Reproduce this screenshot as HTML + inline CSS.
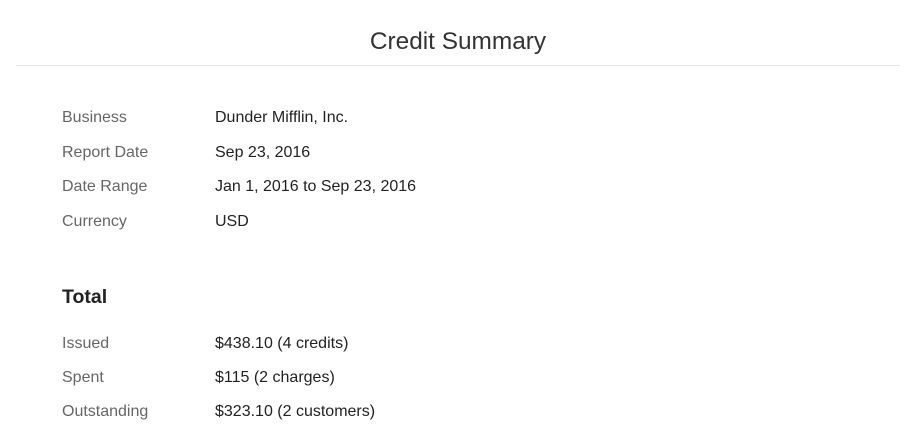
<!DOCTYPE html>
<html><head><style>
body{margin:0;width:910px;height:434px;background:#fff;font-family:"Liberation Sans",sans-serif;position:relative;overflow:hidden}
.t{position:absolute;left:0;width:916px;text-align:center;top:28px;font-size:24.4px;color:#333}
.hr{position:absolute;left:16px;right:10px;top:65px;height:1px;background:#e6e6e6}
.r{position:absolute;font-size:16px;line-height:18px}
.l{left:62px;color:#666}
.v{left:215px;color:#222}
.h{position:absolute;left:62px;top:286px;font-size:19.5px;font-weight:bold;color:#222}
</style></head><body>
<div class="t">Credit Summary</div>
<div class="hr"></div>
<div class="r l" style="top:109px">Business</div><div class="r v" style="top:109px">Dunder Mifflin, Inc.</div>
<div class="r l" style="top:144px">Report Date</div><div class="r v" style="top:144px">Sep 23, 2016</div>
<div class="r l" style="top:178px">Date Range</div><div class="r v" style="top:178px">Jan 1, 2016 to Sep 23, 2016</div>
<div class="r l" style="top:213px">Currency</div><div class="r v" style="top:213px">USD</div>
<div class="h">Total</div>
<div class="r l" style="top:335px">Issued</div><div class="r v" style="top:335px">$438.10 (4 credits)</div>
<div class="r l" style="top:369px">Spent</div><div class="r v" style="top:369px">$115 (2 charges)</div>
<div class="r l" style="top:403px">Outstanding</div><div class="r v" style="top:403px">$323.10 (2 customers)</div>
</body></html>
